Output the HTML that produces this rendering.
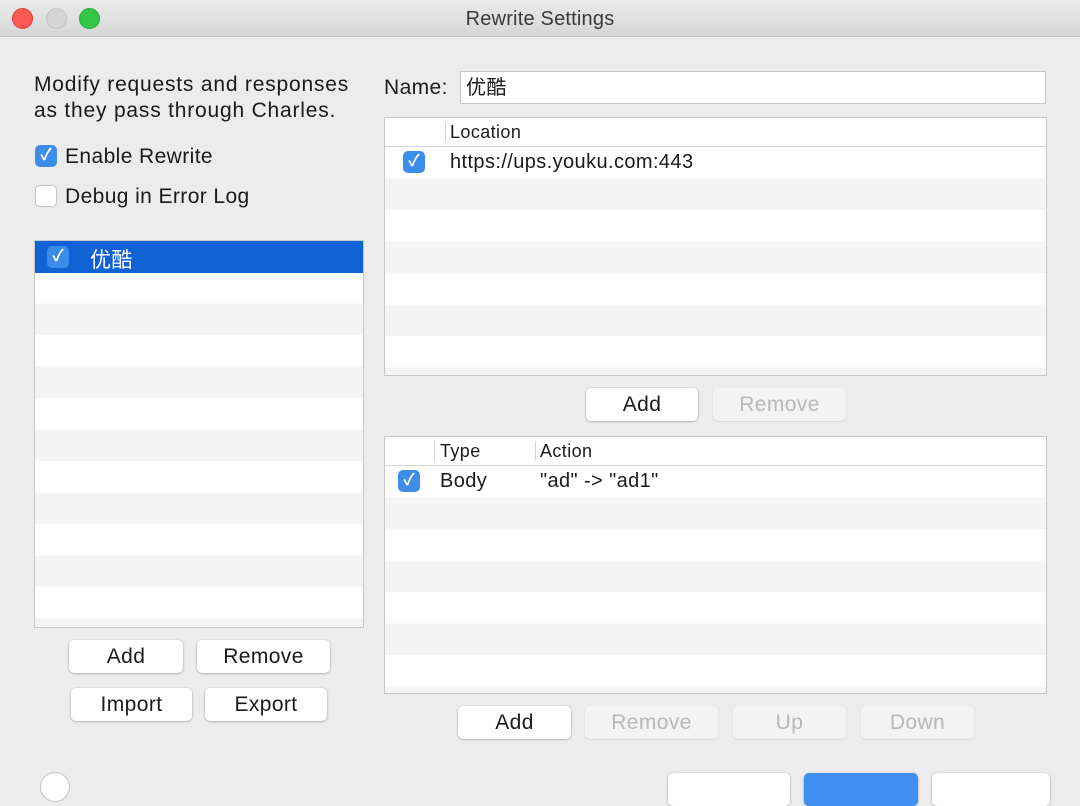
<!DOCTYPE html>
<html><head><meta charset="utf-8"><style>
*{box-sizing:border-box;margin:0;padding:0}
body{width:1080px;height:781px;overflow:hidden;background:#ececec;font-family:"Liberation Sans","Noto Sans CJK SC",sans-serif;color:#1a1a1a;position:relative;letter-spacing:0.4px}
.a{position:absolute}
.tb{left:0;top:0;width:1080px;height:37px;background:linear-gradient(#ebebeb,#d6d6d6);border-bottom:1px solid #c4c4c4;text-align:center;font-size:20px;line-height:38px;color:#3a3a3a;letter-spacing:0.2px}
.dot{width:21px;height:21px;border-radius:50%;top:8px}
.t{font-size:21px;white-space:nowrap}
.cb{width:22px;height:22px;border-radius:5px;background:#3d8ee8;color:#fff;font-size:16px;font-weight:bold;text-align:center;line-height:22px;letter-spacing:0}
.cbo{width:22px;height:22px;border-radius:5px;background:#fff;border:1px solid #c4c4c4}
.tbl{background:#fff;border:1px solid #c8c8c8;overflow:hidden}
.rows{background:repeating-linear-gradient(#fff 0,#fff 31.5px,#f4f4f5 31.5px,#f4f4f5 63px)}
.btn{height:33px;background:#fff;border-radius:5px;box-shadow:0 0.5px 2px rgba(0,0,0,.35);font-size:21px;text-align:center;line-height:34px}
.dis{color:#b8b8b8;background:#f3f3f3;box-shadow:0 0.5px 1.5px rgba(0,0,0,.15)}
.hd{height:29px;border-bottom:1px solid #d4d4d4;background:#fff;font-size:18px;line-height:29px}
.sep{width:1px;height:20px;top:4px;background:#d4d4d4}
</style></head><body>
<div class="a tb">Rewrite Settings</div>
<div class="a dot" style="left:12px;background:#fc5753;border:1px solid #df3d38"></div>
<div class="a dot" style="left:46px;background:#d5d5d5;border:1px solid #c2c2c2"></div>
<div class="a dot" style="left:79px;background:#33c748;border:1px solid #27aa35"></div>

<div class="a t" style="left:34px;top:72px;line-height:26px;letter-spacing:0.8px">Modify requests and responses<br>as they pass through Charles.</div>
<div class="a cb" style="left:35px;top:145px">✓</div>
<div class="a t" style="left:65px;top:145px">Enable Rewrite</div>
<div class="a cbo" style="left:35px;top:185px"></div>
<div class="a t" style="left:65px;top:185px">Debug in Error Log</div>

<div class="a tbl" style="left:34px;top:240px;width:330px;height:388px">
 <div class="rows" style="position:absolute;left:0;top:31px;right:0;bottom:0"></div>
 <div style="position:absolute;left:0;top:0;right:0;height:32px;background:#1163d5"></div>
 <div class="a cb" style="left:12px;top:5px;background:#3b8bea">✓</div>
 <div class="a t" style="left:55px;top:3px;color:#fff">优酷</div>
</div>
<div class="a btn" style="left:69px;top:640px;width:114px">Add</div>
<div class="a btn" style="left:197px;top:640px;width:133px">Remove</div>
<div class="a btn" style="left:71px;top:688px;width:121px">Import</div>
<div class="a btn" style="left:205px;top:688px;width:122px">Export</div>

<div class="a t" style="left:384px;top:76px">Name:</div>
<div class="a" style="left:460px;top:71px;width:586px;height:33px;background:#fff;border:1px solid #c6c6c6;font-size:20px;line-height:33px;padding-left:5px">优酷</div>

<div class="a tbl" style="left:384px;top:117px;width:663px;height:259px">
 <div class="hd"><div class="a sep" style="left:60px"></div><span style="position:absolute;left:65px">Location</span></div>
 <div class="rows" style="position:absolute;left:0;top:29px;right:0;bottom:0"></div>
 <div class="a cb" style="left:18px;top:33px">✓</div>
 <div class="a t" style="left:65px;top:33px;font-size:20px">https://ups.youku.com:443</div>
</div>
<div class="a btn" style="left:586px;top:388px;width:112px">Add</div>
<div class="a btn dis" style="left:713px;top:388px;width:133px">Remove</div>

<div class="a tbl" style="left:384px;top:436px;width:663px;height:258px">
 <div class="hd"><div class="a sep" style="left:49px"></div><span style="position:absolute;left:55px">Type</span><div class="a sep" style="left:150px"></div><span style="position:absolute;left:155px">Action</span></div>
 <div class="rows" style="position:absolute;left:0;top:29px;right:0;bottom:0"></div>
 <div class="a cb" style="left:13px;top:33px">✓</div>
 <div class="a t" style="left:55px;top:33px;font-size:20px">Body</div>
 <div class="a t" style="left:155px;top:33px;font-size:20px">"ad" -&gt; "ad1"</div>
</div>
<div class="a btn" style="left:458px;top:706px;width:113px">Add</div>
<div class="a btn dis" style="left:585px;top:706px;width:133px">Remove</div>
<div class="a btn dis" style="left:733px;top:706px;width:113px">Up</div>
<div class="a btn dis" style="left:861px;top:706px;width:113px">Down</div>

<div class="a" style="left:40px;top:772px;width:30px;height:30px;border-radius:50%;background:#fff;border:1px solid #c4c4c4"></div>
<div class="a btn" style="left:668px;top:773px;width:122px"></div>
<div class="a btn" style="left:804px;top:773px;width:114px;background:#3f8ef0"></div>
<div class="a btn" style="left:932px;top:773px;width:118px"></div>
</body></html>
